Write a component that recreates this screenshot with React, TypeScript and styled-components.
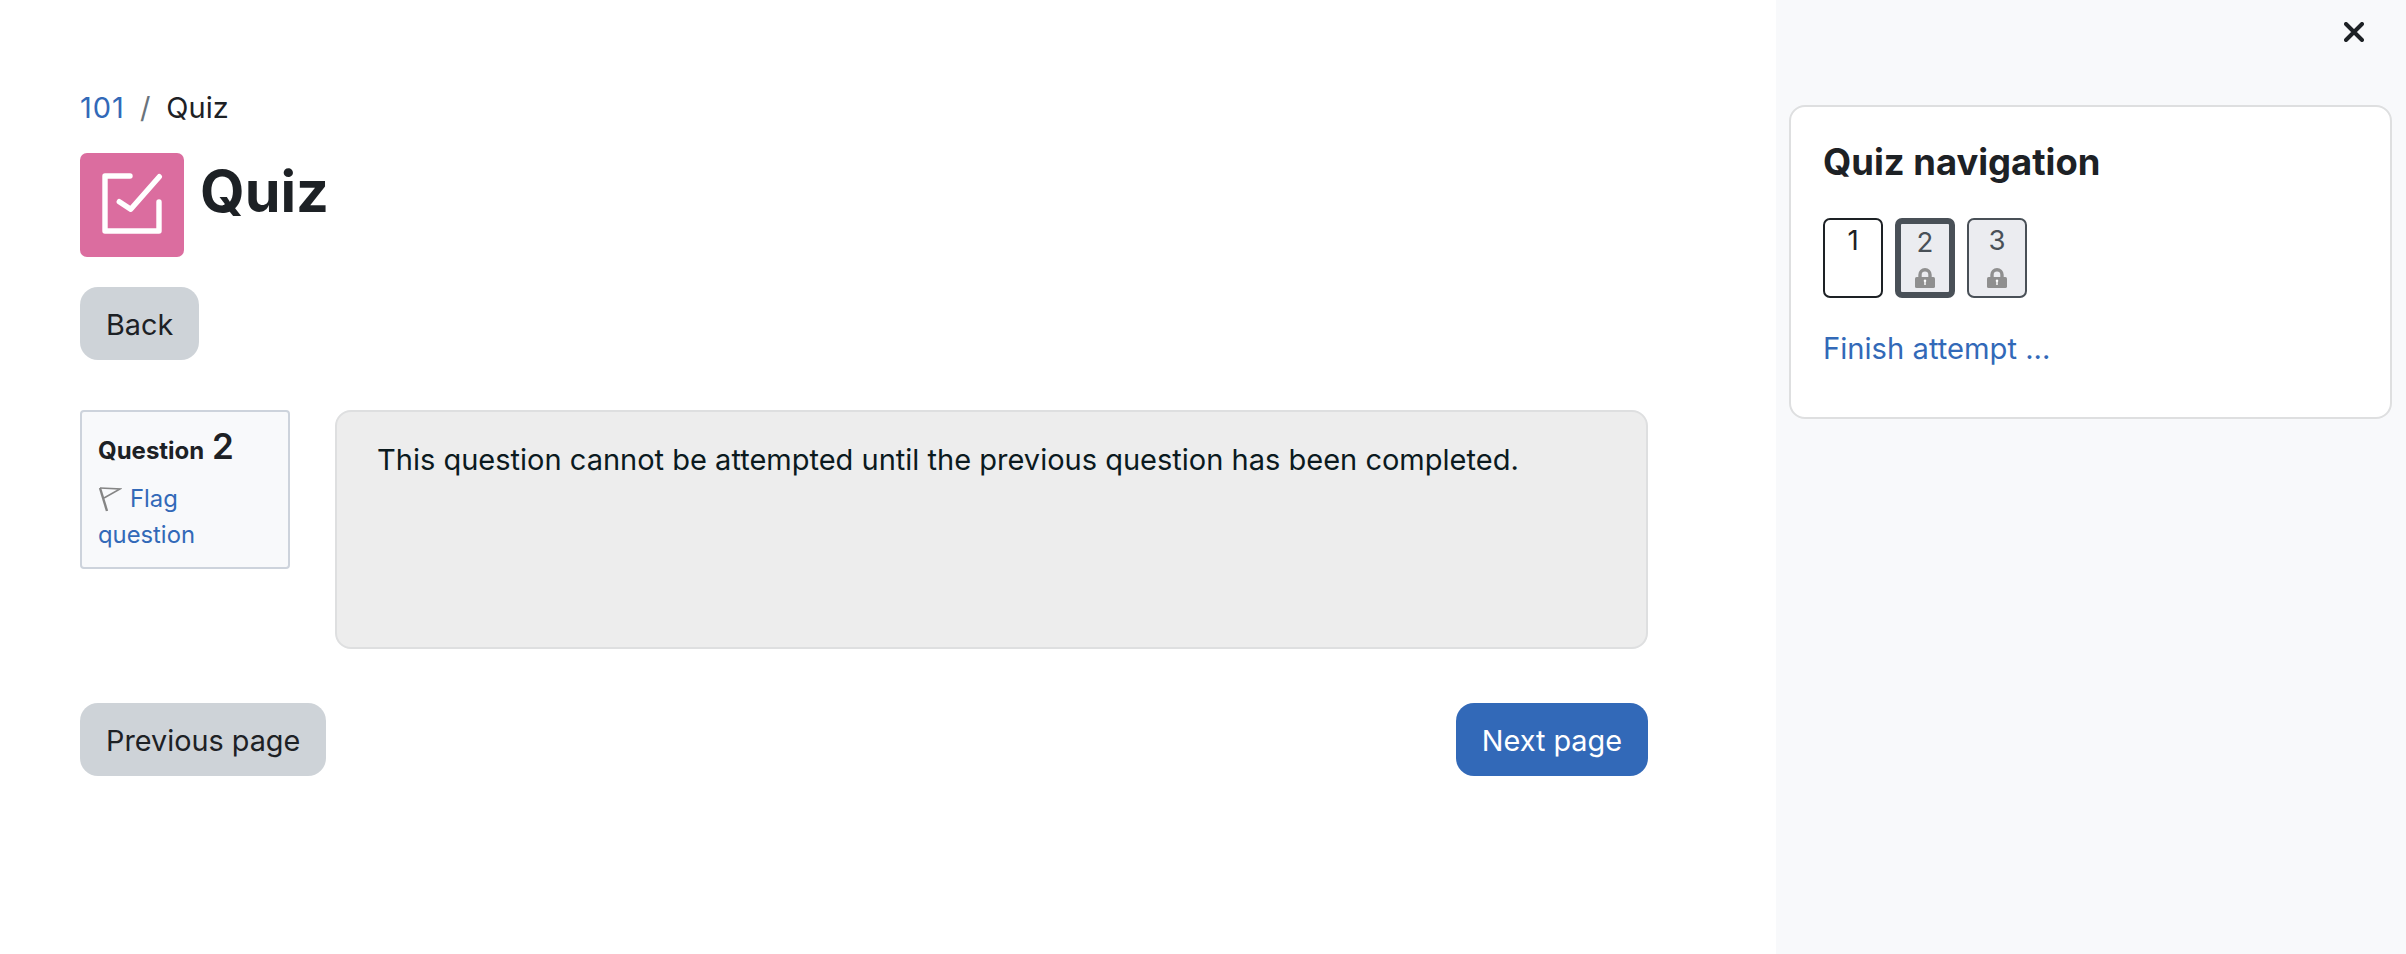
import React from "react";
import styled, { createGlobalStyle } from "styled-components";

const Global = createGlobalStyle`
  html, body { margin: 0; padding: 0; background: #fff; }
  body { font-family: Inter, "Liberation Sans", sans-serif; color: #1d2125; }
  * { box-sizing: border-box; }
`;

const Page = styled.div`
  display: flex;
  width: 2406px;
  height: 954px;
  overflow: hidden;
`;

const Main = styled.main`
  width: 1776px;
  padding: 89px 128px 0 80px;
  display: flex;
  flex-direction: column;
`;

const Breadcrumb = styled.nav`
  display: flex;
  align-items: center;
  height: 38px;
  font-size: 29px;
  line-height: 38px;
`;

const Link = styled.a`
  color: #3269b8;
  text-decoration: none;
`;

const CourseLink = styled(Link)`
  letter-spacing: 1px;
`;

const Slash = styled.span`
  color: #6a737b;
  margin: 0 16px 0 15px;
`;

const Heading = styled.header`
  display: flex;
  align-items: flex-start;
  gap: 16px;
  margin-top: 26px;
`;

const IconTile = styled.div`
  width: 104px;
  height: 104px;
  border-radius: 7px;
  background: #db6d9f;
`;

const Title = styled.h1`
  margin: 0;
  font-size: 57.5px;
  line-height: 76px;
  font-weight: 700;
`;

const Button = styled.button<{ $primary?: boolean }>`
  display: block;
  height: 73px;
  border: 0;
  border-radius: 18px;
  padding: 2px 26px 0;
  font: 400 28.8px Inter, sans-serif;
  background: ${(p) => (p.$primary ? "#3269b8" : "#ced3d8")};
  color: ${(p) => (p.$primary ? "#fff" : "#1d2125")};
`;

const BackRow = styled.div`
  margin-top: 30px;
`;

const QuestionRow = styled.section`
  display: flex;
  align-items: flex-start;
  gap: 45px;
  margin-top: 50px;
`;

const InfoBox = styled.aside`
  width: 210px;
  height: 159px;
  flex: none;
  border: 2px solid #cdd3dc;
  border-radius: 4px;
  background: #f8f9fb;
  padding: 12px 16px;
`;

const QuestionLabel = styled.h3`
  margin: 0;
  font-size: 24px;
  font-weight: 700;
  line-height: 44px;
`;

const QuestionNo = styled.span`
  font-size: 35px;
  font-weight: 600;
  margin-left: 2px;
`;

const FlagLink = styled(Link)`
  display: block;
  font-size: 23.8px;
  line-height: 36px;
  margin-top: 8px;
`;

const FlagIcon = styled.svg`
  width: 24px;
  height: 26px;
  margin-right: 8px;
  vertical-align: -5px;
`;

const Content = styled.div`
  flex: 1;
  height: 239px;
  border: 2px solid #dedfe0;
  border-radius: 16px;
  background: #ededed;
  padding: 28px 40px;
  font-size: 29.03px;
  line-height: 40px;
  color: #0b1a1e;
`;

const Footer = styled.div`
  display: flex;
  justify-content: space-between;
  margin-top: 54px;
`;

const Sidebar = styled.aside`
  width: 630px;
  height: 954px;
  background: #f8f9fb;
  padding: 0 14px 0 13px;
  display: flex;
  flex-direction: column;
`;

const CloseBar = styled.div`
  height: 105px;
  display: flex;
  justify-content: flex-end;
  padding: 22px 28px 0 0;
`;

const CloseIcon = styled.svg`
  width: 20px;
  height: 20px;
`;

const Card = styled.section`
  height: 314px;
  background: #fff;
  border: 2px solid #dedfe0;
  border-radius: 16px;
  padding: 32px;
`;

const CardTitle = styled.h5`
  margin: 0;
  font-size: 36.4px;
  line-height: 46px;
  font-weight: 700;
`;

const NavGrid = styled.div`
  display: flex;
  gap: 12px;
  margin-top: 33px;
`;

const NavButton = styled.div<{ $weight: number; $locked?: boolean }>`
  width: 60px;
  height: 80px;
  position: relative;
  display: flex;
  justify-content: center;
  border: ${(p) => p.$weight}px solid ${(p) => (p.$locked ? "#495057" : "#1d2125")};
  border-radius: 7px;
  background: ${(p) => (p.$locked ? "#ebecf0" : "#fff")};
  color: ${(p) => (p.$locked ? "#495057" : "#1d2125")};
  font-size: 27.6px;
  line-height: 36px;
  padding-top: ${(p) => 2 - (p.$weight - 2)}px;
`;

const LockedOffset = styled.div<{ $weight: number }>`
  position: absolute;
  inset: 0;
  margin: ${(p) => 2 - p.$weight}px;
`;

const LockIcon = styled.svg`
  position: absolute;
  left: 50%;
  bottom: 8px;
  transform: translateX(-50%);
  width: 20px;
  height: 20px;
`;

const FinishLink = styled(Link)`
  display: block;
  margin-top: 32px;
  font-size: 29.2px;
  line-height: 38px;
`;

const Lock = ({ weight }: { weight: number }) => (
  <LockedOffset $weight={weight}>
    <LockIcon viewBox="0 0 20 20">
      <path d="M5 10V6.700a5 5 0 0 1 10 0V10" fill="none" stroke="#8f8f8f" strokeWidth="3.4" />
      <rect x="0" y="9" width="20" height="11" rx="1.6" fill="#8f8f8f" />
      <path d="M10 11.500a1.300 1.300 0 0 1 .7 2.400V17H9.300v-3.100A1.300 1.300 0 0 1 10 11.500z" fill="#fff" />
    </LockIcon>
  </LockedOffset>
);

export default function App() {
  return (
    <Page>
      <Global />
      <Main>
        <Breadcrumb>
          <CourseLink href="#">101</CourseLink>
          <Slash>/</Slash>
          <span>Quiz</span>
        </Breadcrumb>
        <Heading>
          <IconTile>
            <svg width="104" height="104" viewBox="0 0 104 104" fill="none" stroke="#fff" strokeWidth="5.400" strokeLinecap="round" strokeLinejoin="round">
              <path d="M50 23H25V78H79V49" />
              <path d="M39.300 48.700L50.700 56.300L79.300 23.700" />
            </svg>
          </IconTile>
          <Title>Quiz</Title>
        </Heading>
        <BackRow>
          <Button>Back</Button>
        </BackRow>
        <QuestionRow>
          <InfoBox>
            <QuestionLabel>
              Question <QuestionNo>2</QuestionNo>
            </QuestionLabel>
            <FlagLink href="#">
              <FlagIcon viewBox="0 0 24 26" fill="none" stroke="#858585">
                <path d="M2 2L9 25" strokeWidth="2.400" />
                <path d="M2 2L22 3L6 12" strokeWidth="1.500" />
              </FlagIcon>
              Flag question
            </FlagLink>
          </InfoBox>
          <Content>This question cannot be attempted until the previous question has been completed.</Content>
        </QuestionRow>
        <Footer>
          <Button>Previous page</Button>
          <Button $primary>Next page</Button>
        </Footer>
      </Main>
      <Sidebar>
        <CloseBar>
          <CloseIcon viewBox="0 0 20 20" fill="none" stroke="#1d2125" strokeWidth="4" strokeLinecap="round">
            <path d="M2 2L18 18M18 2L2 18" />
          </CloseIcon>
        </CloseBar>
        <Card>
          <CardTitle>Quiz navigation</CardTitle>
          <NavGrid>
            <NavButton $weight={2}>1</NavButton>
            <NavButton $weight={6} $locked>
              2
              <Lock weight={6} />
            </NavButton>
            <NavButton $weight={2} $locked>
              3
              <Lock weight={2} />
            </NavButton>
          </NavGrid>
          <FinishLink href="#">Finish attempt ...</FinishLink>
        </Card>
      </Sidebar>
    </Page>
  );
}
